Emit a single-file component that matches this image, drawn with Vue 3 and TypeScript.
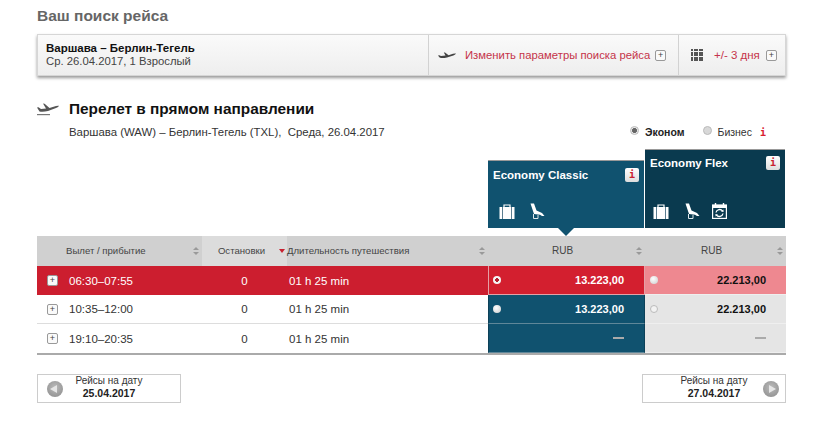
<template>
  <div class="page">
    <h2 class="page-title">Ваш поиск рейса</h2>

    <div class="search-bar">
      <div class="search-info">
        <strong>Варшава – Берлин-Тегель</strong>
        <span>Ср. 26.04.2017, 1 Взрослый</span>
      </div>
      <div class="search-action change">
        <svg class="bar-plane" viewBox="0 0 18 8" width="18" height="8">
          <path d="M0 4.6 L1.2 4.2 L3 5 L7.5 4.6 L5.8 1.6 L7 1.6 L10.6 4.2 L15 2.8 Q17.4 2.2 18 2.6 Q17.6 3.6 15.4 4.4 L9 6.6 Q4 7.6 1.6 6.6Z" fill="#444" />
        </svg>
        <a>Изменить параметры поиска рейса</a>
        <span class="plus-box">+</span>
      </div>
      <div class="search-action days">
        <span class="dots"><i v-for="n in 25" :key="n"></i></span>
        <a>+/- 3 дня</a>
        <span class="plus-box">+</span>
      </div>
    </div>

    <div class="direct-head">
      <svg class="head-plane" viewBox="0 0 22 14" width="22" height="14">
        <path d="M0 5.5 L1.5 5.2 L4 7 L9 6.6 L6 1.6 L7.6 1.8 L12.5 6 L19 4 Q21.5 3.4 22 3.8 Q21.6 5 19 6 L11 9 Q6 10 2.5 9.4Z" fill="#555" />
        <rect x="0" y="12" width="13" height="1.2" fill="#777" />
      </svg>
      <h3>Перелет в прямом направлении</h3>
    </div>

    <div class="route-line">
      <span class="route">Варшава (WAW) – Берлин-Тегель (TXL),&nbsp; Среда, 26.04.2017</span>
      <div class="cabins">
        <span class="radio checked"></span><b>Эконом</b>
        <span class="radio biz"></span><span>Бизнес</span>
        <span class="cabin-i">i</span>
      </div>
    </div>

    <div class="fares">
      <div v-for="f in fares" :key="f.name" class="fare" :class="f.cls">
        <div class="fare-top">
          <span class="fare-name">{{ f.name }}</span>
          <span class="info-btn">i</span>
        </div>
        <div class="fare-icons">
          <svg viewBox="0 0 16 15" width="16" height="15">
            <path d="M5 3V1h6v2" fill="none" stroke="#fff" stroke-width="1.2" />
            <rect x="0.5" y="3" width="15" height="12" fill="#fff" />
            <path d="M3.5 3v12M12.5 3v12" stroke="#4a6f84" stroke-width="0.9" />
          </svg>
          <svg viewBox="0 0 15 16" width="15" height="16">
            <path d="M0.5 0.5 L4 0.5 L6.5 7.5 L12 10 L14.5 13 L12 13 L10 11.8 L4 11 Z" fill="#fff" />
            <path d="M3.5 11V15.5H8V12" fill="none" stroke="#dfe8ec" stroke-width="1" />
          </svg>
          <svg v-if="f.flex" class="cal" viewBox="0 0 15 16" width="15" height="16">
            <rect x="0.6" y="2" width="13.8" height="13.4" fill="none" stroke="#fff" stroke-width="1.2" />
            <rect x="0.6" y="2" width="13.8" height="3" fill="#fff" />
            <path d="M3.5 0v3M11.5 0v3" stroke="#fff" stroke-width="1.4" />
            <path d="M4 9.5 A3.6 3.6 0 0 1 10.6 8.2 M11 10.5 A3.6 3.6 0 0 1 4.4 11.8" fill="none" stroke="#fff" stroke-width="1.3" />
            <path d="M9 8.6 L11.6 9 L11.4 6.4 Z M6 11.4 L3.4 11 L3.6 13.6 Z" fill="#fff" />
          </svg>
        </div>
      </div>
    </div>

    <div class="flights">
      <div class="cell head first">
        <span>Вылет / прибытие</span><span class="sort"></span>
      </div>
      <div class="cell head stops-head">Остановки</div>
      <div class="cell head dur-head">
        <span class="sort-down"></span><span>Длительность путешествия</span><span class="sort"></span>
      </div>
      <div class="cell head cur">RUB<span class="sort abs"></span><span class="notch"></span></div>
      <div class="cell head cur">RUB<span class="sort abs"></span></div>

      <template v-for="(r, i) in rows" :key="r.time">
        <div class="cell time" :class="rowClass(i)">
          <span class="plus-box">+</span><span>{{ r.time }}</span>
        </div>
        <div class="cell stops" :class="rowClass(i)">0</div>
        <div class="cell dur" :class="rowClass(i)">01 h 25 min</div>
        <div class="cell price classic" :class="{ picked: i === 0 }">
          <span v-if="r.classic" class="dot" :class="{ on: i === 0 }"></span>
          <span v-if="r.classic" class="amount">{{ r.classic }}</span>
          <span v-else class="dash"></span>
        </div>
        <div class="cell price flexp" :class="{ pink: i === 0 }">
          <span v-if="r.flex" class="dot" :class="{ thin: i === 1 }"></span>
          <span v-if="r.flex" class="amount">{{ r.flex }}</span>
          <span v-else class="dash"></span>
        </div>
      </template>
    </div>

    <div class="date-nav">
      <div class="date-btn">
        <span class="arrow prev"></span>
        <div class="date-text"><span>Рейсы на дату</span><b>25.04.2017</b></div>
      </div>
      <div class="date-btn">
        <div class="date-text"><span>Рейсы на дату</span><b>27.04.2017</b></div>
        <span class="arrow next"></span>
      </div>
    </div>
  </div>
</template>

<script setup lang="ts">
interface Fare { name: string; cls: string; flex: boolean }
interface Row { time: string; classic: string; flex: string }

const fares: Fare[] = [
  { name: 'Economy Classic', cls: 'classic-card', flex: false },
  { name: 'Economy Flex', cls: 'flex-card', flex: true },
];

const rows: Row[] = [
  { time: '06:30–07:55', classic: '13.223,00', flex: '22.213,00' },
  { time: '10:35–12:00', classic: '13.223,00', flex: '22.213,00' },
  { time: '19:10–20:35', classic: '', flex: '' },
];

function rowClass(i: number) {
  return { selected: i === 0, last: i === rows.length - 1 };
}
</script>

<style>
html, body { background: #fff; }
</style>

<style scoped>
.page {
  width: 820px;
  height: 439px;
  box-sizing: border-box;
  padding: 7px 34px 0 37px;
  font-family: "Liberation Sans", Arial, sans-serif;
  font-size: 11px;
  color: #333;
  overflow: hidden;
}

.page-title {
  margin: 0 0 9px;
  font-size: 15.5px;
  line-height: 18px;
  font-weight: bold;
  color: #666;
}

.search-bar {
  display: flex;
  height: 42px;
  box-sizing: border-box;
  border: 1px solid #d6d6d6;
  background: linear-gradient(#fafafa, #eee);
  box-shadow: 0 2px 3px #999;
}

.search-info {
  width: 390px;
  box-sizing: border-box;
  padding: 7px 0 0 8px;
  display: flex;
  flex-direction: column;
  font-size: 11.3px;
  line-height: 13px;
  color: #444;
}
.search-info strong { color: #111; font-size: 11.5px; }

.search-action {
  display: flex;
  align-items: center;
  border-left: 1px solid #d2d2d2;
  box-sizing: border-box;
  white-space: nowrap;
}
.search-action a { color: #c5334a; font-size: 11.3px; }
.change { width: 250px; padding-left: 9px; }
.change a { margin: 0 5px 0 9px; }
.days { flex: 1; padding-left: 12px; }
.search-action.days a { font-size: 11.5px; margin: 0 6px 0 11px; }
.bar-plane { flex: none; }

.dots {
  display: grid;
  grid-template-columns: repeat(5, 2px);
  gap: 0.5px;
  width: 12px;
}
.dots i { width: 2px; height: 2px; background: #555; }

.plus-box {
  display: inline-flex;
  align-items: center;
  justify-content: center;
  width: 9px;
  height: 9px;
  border: 1px solid #999;
  border-radius: 2px;
  background: #fafafa;
  color: #444;
  font-size: 9px;
  line-height: 1;
  flex: none;
}

.direct-head {
  display: flex;
  align-items: center;
  margin-top: 24px;
  height: 18px;
}
.head-plane { flex: none; margin: 0 10px 0 0; }
.direct-head h3 {
  margin: 0;
  font-size: 15.4px;
  font-weight: bold;
  color: #111;
}

.route-line {
  display: flex;
  justify-content: space-between;
  align-items: center;
  margin-top: 6px;
  padding-left: 32px;
  height: 16px;
}
.route { font-size: 11.4px; color: #333; }

.cabins {
  display: flex;
  align-items: center;
  margin-right: 20px;
  font-size: 10.5px;
}
.cabins b { margin-left: 6px; color: #222; }
.radio {
  width: 9px;
  height: 9px;
  border-radius: 50%;
  background: #d8d8d8;
  border: 1px solid #bbb;
  box-sizing: border-box;
  margin-top: -3px;
}
.radio.checked { background: radial-gradient(#666 0 2.2px, #e8e8e8 2.6px); }
.radio.biz { margin: -3px 6px 0 18px; }
.cabin-i {
  margin-left: 8px;
  color: #d9202f;
  font-family: "DejaVu Sans Mono", monospace;
  font-size: 10px;
  font-weight: bold;
}

.fares {
  display: flex;
  justify-content: flex-end;
  align-items: flex-end;
  gap: 1px;
  height: 79px;
  margin-top: 9px;
  padding-right: 1px;
}
.fare {
  box-sizing: border-box;
  padding: 6px 5px 0 5px;
  color: #fff;
  display: flex;
  flex-direction: column;
  border-top: 1px solid #999;
}
.classic-card { width: 156px; height: 68px; background: #10526f; padding-top: 7px; }
.flex-card { width: 140px; height: 79px; background: #0a3a4f; }
.fare-top { display: flex; justify-content: space-between; align-items: flex-start; }
.fare-name { font-size: 11.5px; font-weight: bold; line-height: 14px; margin-top: 0; }
.info-btn {
  width: 14px;
  height: 14px;
  border-radius: 2px;
  background: linear-gradient(#fff, #ddd);
  color: #c8202f;
  font-family: "DejaVu Sans Mono", monospace;
  font-weight: bold;
  font-size: 10px;
  line-height: 14px;
  text-align: center;
}
.fare-icons {
  margin-top: auto;
  margin-bottom: 9px;
  padding-left: 6px;
  display: flex;
  align-items: flex-end;
  gap: 15px;
}
.flex-card .fare-icons { padding-left: 3px; gap: 16px; }
.fare-icons .cal { margin-left: -4px; }

.flights {
  display: grid;
  grid-template-columns: 165px 85px 201px 157px 141px;
  grid-template-rows: 30px 29px 29px 29px;
  margin-top: 8px;
  width: 749px;
  border-bottom: 2px solid #aaa;
}

.cell {
  position: relative;
  display: flex;
  align-items: center;
  box-sizing: border-box;
  font-size: 11px;
}
.cell.head { background: #d0d0d0; font-size: 9.6px; color: #444; padding-bottom: 1px; }
.first { padding-left: 29px; justify-content: space-between; padding-right: 3px; }
.stops-head { background: #dcdcdc !important; justify-content: center; padding-right: 6px; }
.dur-head { padding-right: 3px; }
.dur-head span:nth-child(2) { flex: 1; }
.cur { justify-content: center; padding-right: 8px; }
.cell.cur { font-size: 10px; }

.sort {
  position: relative;
  width: 6px;
  height: 8px;
  flex: none;
}
.sort::before, .sort::after {
  content: "";
  position: absolute;
  left: 0;
  border-left: 3px solid transparent;
  border-right: 3px solid transparent;
}
.sort::before { top: 0; border-bottom: 3px solid #999; }
.sort::after { bottom: 0; border-top: 3px solid #999; }
.sort.abs { position: absolute; right: 3px; top: 11px; }

.sort-down {
  width: 0;
  height: 0;
  border-left: 3px solid transparent;
  border-right: 3px solid transparent;
  border-top: 4px solid #c8202f;
  margin-right: 2px;
  margin-left: -8px;
}

.notch {
  position: absolute;
  left: 70px;
  top: -8px;
  width: 0;
  height: 0;
  border-left: 8px solid transparent;
  border-right: 8px solid transparent;
  border-top: 8px solid #10526f;
}

.time { gap: 11px; padding-left: 10px; font-size: 11.5px; color: #333; border-bottom: 1px solid #ddd; }
.stops { justify-content: center; font-size: 11.5px; color: #333; border-bottom: 1px solid #ddd; }
.dur { padding-left: 2px; font-size: 11.5px; color: #333; border-bottom: 1px solid #ddd; }
.cell.selected { background: #cc1e2f; color: #fff; border-bottom: none; }
.cell.last { border-bottom: none; }

.price {
  padding: 0 20px 0 4px;
  font-size: 11px;
  font-weight: bold;
}
.amount { margin-left: auto; }
.classic {
  background: #10526f;
  color: #fff;
  border-left: 1px solid #0c4058;
  border-right: 1px solid #0c4058;
  border-bottom: 1px solid #5f8799;
}
.classic.picked { background: #d31f2f; border-color: #e4a0a6; }
.flexp { background: #e5e5e5; color: #111; border-bottom: 1px solid #efefef; padding-left: 5px; }
.flexp.pink { background: #ee8890; }

.dot {
  width: 8px;
  height: 8px;
  border-radius: 50%;
  background: radial-gradient(circle at 40% 35%, #fff, #ccc);
  flex: none;
}
.dot.on { background: radial-gradient(#b3202f 0 1.6px, #f4f4f4 2px); }
.dot.thin { background: #f2f2f2; border: 1px solid #bbb; box-sizing: border-box; }
.dash {
  width: 11px;
  height: 2px;
  background: #aaa;
  margin-left: auto;
}

.date-nav {
  display: flex;
  justify-content: space-between;
  margin-top: 19px;
  width: 749px;
}
.date-btn {
  position: relative;
  width: 144px;
  height: 29px;
  box-sizing: border-box;
  border: 1px solid #ccc;
  display: flex;
  align-items: center;
  justify-content: center;
  padding-bottom: 4px;
}
.date-text {
  display: flex;
  flex-direction: column;
  align-items: center;
  font-size: 10px;
  line-height: 12px;
  color: #333;
}
.date-text b { color: #222; font-size: 10.5px; }

.arrow {
  position: absolute;
  top: 6px;
  width: 16px;
  height: 16px;
  border-radius: 50%;
  background: radial-gradient(circle at 50% 40%, #bbb, #8a8a8a);
}
.arrow.prev { left: 9px; }
.arrow.next { right: 6px; }
.arrow::after {
  content: "";
  position: absolute;
  top: 4px;
  border-top: 4px solid transparent;
  border-bottom: 4px solid transparent;
}
.arrow.prev::after { left: 3px; border-right: 7px solid #e6e6e6; }
.arrow.next::after { left: 6px; border-left: 7px solid #e6e6e6; }
</style>
